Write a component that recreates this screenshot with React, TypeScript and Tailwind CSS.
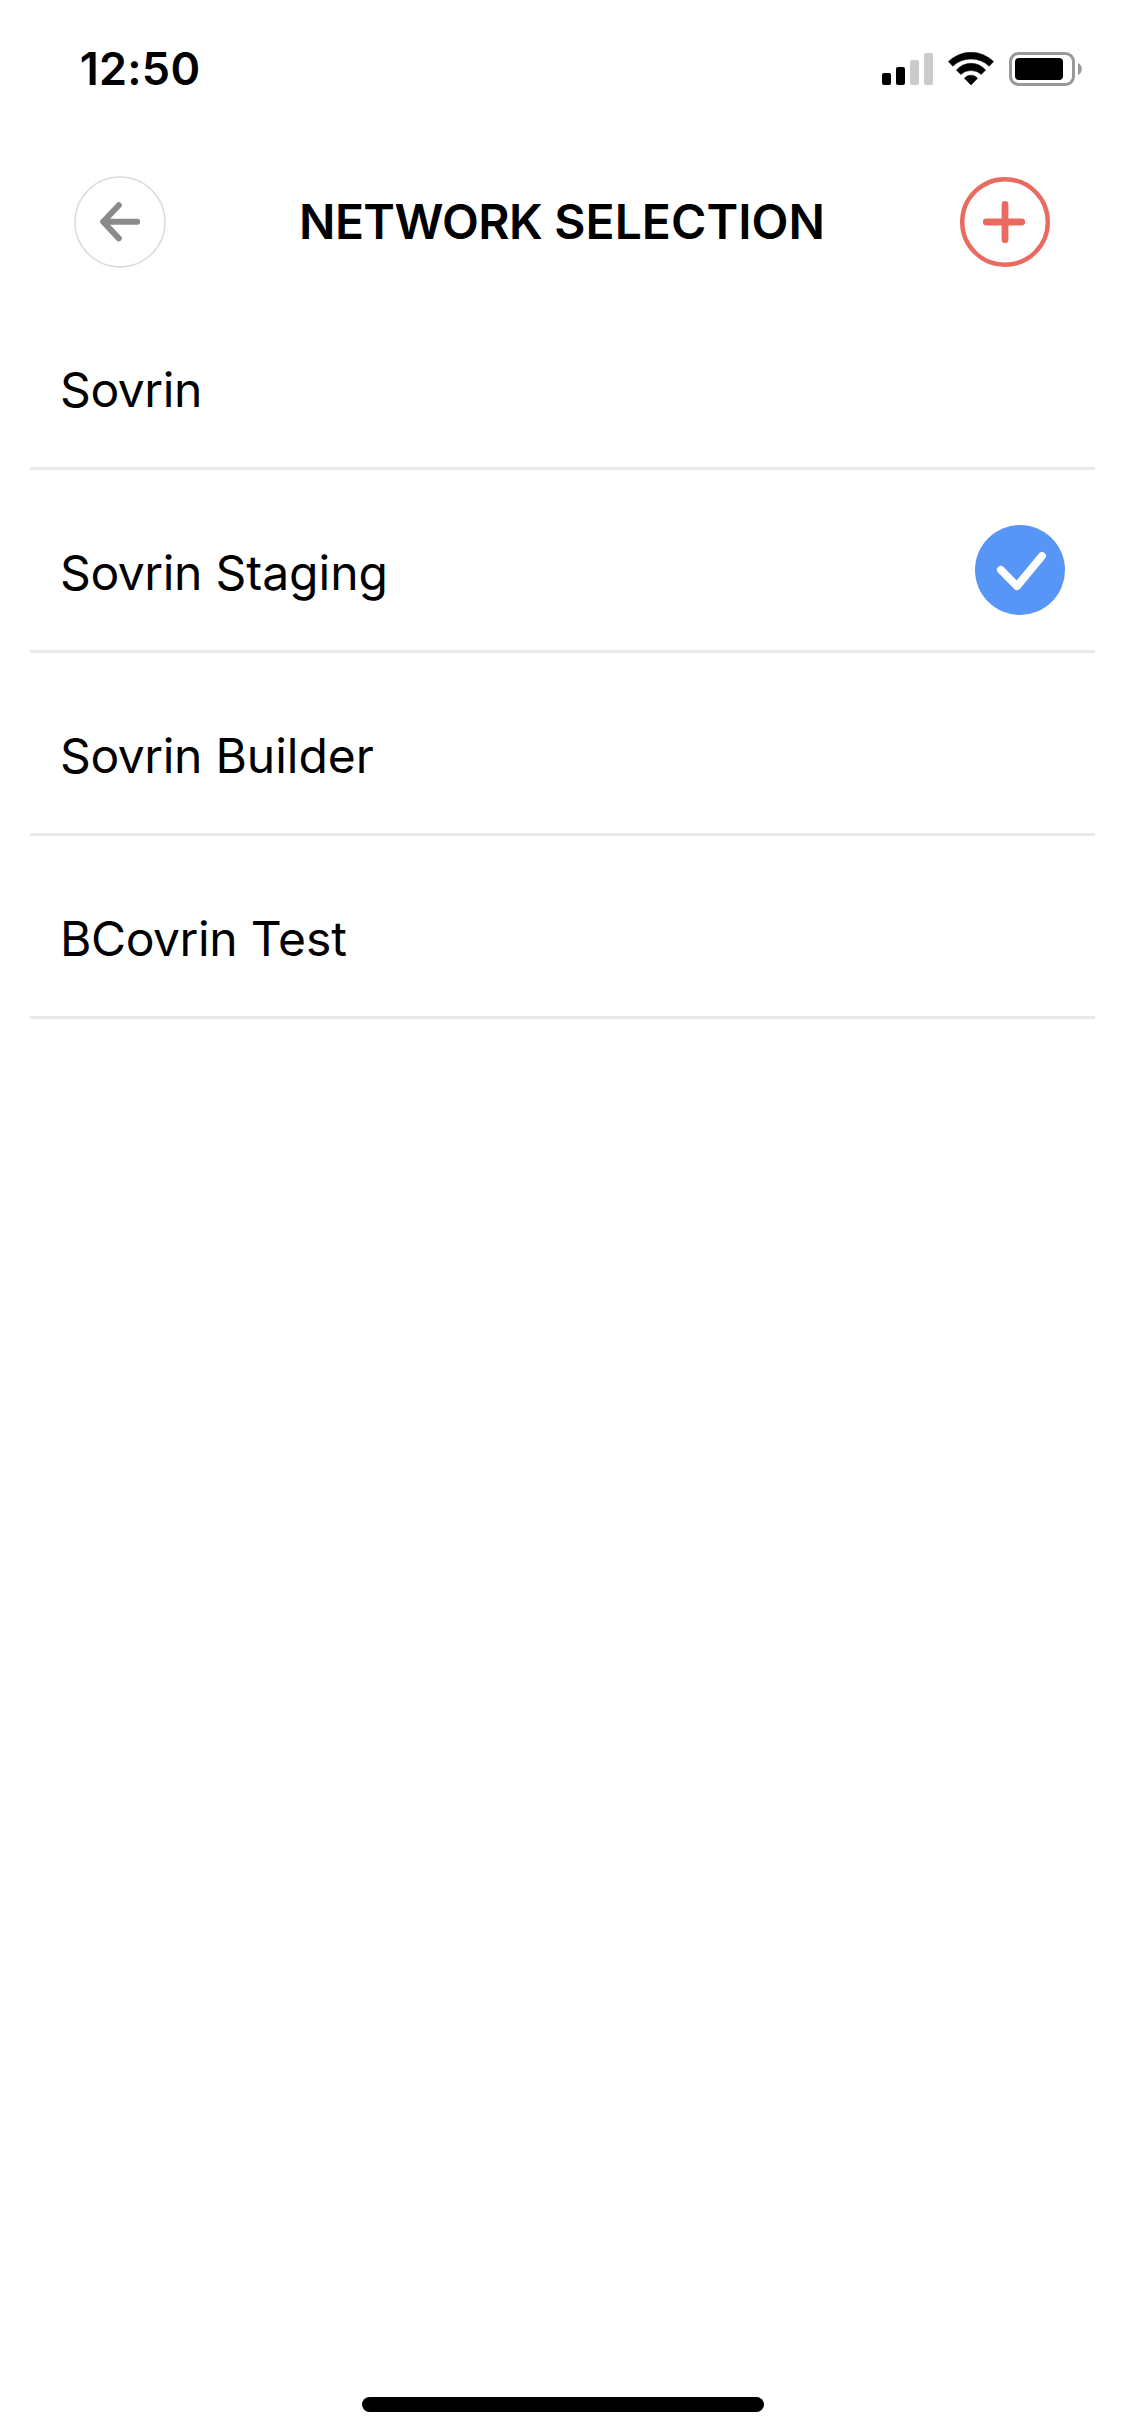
type Network = { family: string; name?: string; selected?: boolean };

const networks: Network[] = [
  { family: 'Sovrin' },
  { family: 'Sovrin', name: 'Staging', selected: true },
  { family: 'Sovrin', name: 'Builder' },
  { family: 'BCovrin', name: 'Test' },
];

function SignalIcon() {
  return (
    <svg width="51" height="34" viewBox="0 0 51 34" className="block">
      <rect x="0" y="21" width="9" height="12" rx="2" fill="#000" />
      <rect x="14" y="15" width="9" height="18" rx="2" fill="#000" />
      <rect x="28" y="8" width="9" height="25" rx="2" fill="#cbcbcb" />
      <rect x="42" y="1" width="9" height="32" rx="2" fill="#cbcbcb" />
    </svg>
  );
}

function WifiIcon() {
  return (
    <svg width="46" height="34" viewBox="0 0 46 34" className="block">
      <path d="M0.4 9.6 A32 32 0 0 1 45.6 9.6 L41.2 14.2 A26.4 26.4 0 0 0 4.8 14.2 Z" fill="#000" stroke="#000" strokeWidth="0.5" strokeLinejoin="round" />
      <path d="M8.4 18.1 A19 19 0 0 1 37.6 18.1 L33.2 22.5 A15 15 0 0 0 12.8 22.5 Z" fill="#000" stroke="#000" strokeWidth="0.5" strokeLinejoin="round" />
      <path d="M16.4 26.3 A8.5 8.5 0 0 1 29.6 26.3 L23 33 Z" fill="#000" stroke="#000" strokeWidth="0.5" strokeLinejoin="round" />
    </svg>
  );
}

function BatteryIcon() {
  return (
    <svg width="74" height="34" viewBox="0 0 74 34" className="block">
      <rect x="1.5" y="1.5" width="63" height="31" rx="8" fill="none" stroke="#999" strokeWidth="3" />
      <rect x="6" y="6" width="48" height="22" rx="4" fill="#000" />
      <path d="M69 11 C74 13 74 21 69 23 Z" fill="#999" />
    </svg>
  );
}

function BackIcon() {
  return (
    <svg width="92" height="92" viewBox="0 0 92 92" fill="none" className="block">
      <circle cx="46" cy="46" r="45" stroke="#dcdcdc" strokeWidth="1.5" />
      <path d="M63.2 45.8 H29.2 M44.8 29.2 L29.2 45.8 L44.8 62.4" stroke="#8a8a8a" strokeWidth="6" strokeLinecap="round" strokeLinejoin="round" />
    </svg>
  );
}

function AddIcon() {
  return (
    <svg width="90" height="90" viewBox="0 0 90 90" fill="none" stroke="#eb6a60" className="block">
      <circle cx="45" cy="45" r="42.8" strokeWidth="4.4" />
      <path d="M26.3 45 H61.7 M45 27.3 V62.7" strokeWidth="6.8" strokeLinecap="round" />
    </svg>
  );
}

function SelectedIcon() {
  return (
    <svg width="90" height="90" viewBox="0 0 90 90" fill="none" className="block">
      <circle cx="45" cy="45" r="45" fill="#5796f7" />
      <path d="M25.8 44.8 L42 61.2 L67 31" stroke="#fff" strokeWidth="7.8" strokeLinecap="round" strokeLinejoin="round" />
    </svg>
  );
}

function StatusBar() {
  return (
    <div className="flex h-[132px] items-start justify-between pl-[79.7px] pr-[42px]">
      <span className="mt-[41px] text-[45px] leading-[56px] font-semibold tracking-[0.25px]">12:50</span>
      <div className="mt-[52px] flex">
        <SignalIcon />
        <div className="ml-[15px]"><WifiIcon /></div>
        <div className="ml-[15px]"><BatteryIcon /></div>
      </div>
    </div>
  );
}

export default function App() {
  return (
    <div className="flex h-[2436px] w-[1125px] flex-col overflow-hidden bg-white font-['Inter',sans-serif] text-black">
      <StatusBar />
      <header className="flex h-[155px] items-center justify-between pr-[75px] pb-[65px] pl-[74px] pt-[90px]">
        <button aria-label="Back"><BackIcon /></button>
        <h1 className="mr-[2px] text-5xl leading-[60px] font-semibold whitespace-nowrap">
          <span className="tracking-[-0.6px]">NETWORK</span>{' '}
          <span className="tracking-[0.05px]">SELECTION</span>
        </h1>
        <button aria-label="Add network"><AddIcon /></button>
      </header>
      <ul className="flex flex-col px-[30px]">
        {networks.map(({ family, name, selected }) => (
          <li key={`${family} ${name ?? ''}`} className="flex h-[183px] items-center justify-between border-b-3 border-[#e9e9e9] pt-5 pr-[30px] pl-[30px]">
            <span className="pt-1.5 text-5xl leading-[60px]">
              <span className="tracking-[-0.42px]">{family}</span>
              {name && ` ${name}`}
            </span>
            {selected && <SelectedIcon />}
          </li>
        ))}
      </ul>
      <div className="mx-auto mt-auto mb-6 h-[15px] w-[402px] rounded-full bg-black" />
    </div>
  );
}
